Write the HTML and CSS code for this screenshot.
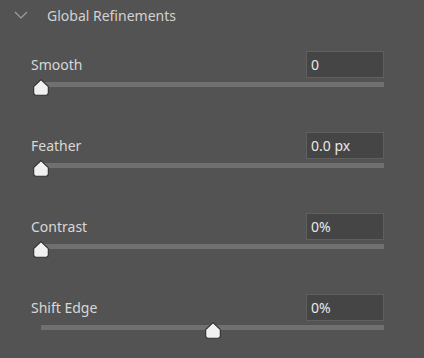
FILE: index.html
```html
<!DOCTYPE html>
<html lang="en">
<head>
    <meta charset="UTF-8">
    <title>Global Refinements</title>
    <link rel="stylesheet" href="styles.css">
</head>
<body>
    <div class="panel">
        <div class="panel-header">
            <svg class="chevron" width="14" height="8" viewBox="0 0 14 8">
                <polyline points="1,1 7,7 13,1" fill="none" stroke="#a0a0a0" stroke-width="1.2"/>
            </svg>
            <span class="panel-title">Global Refinements</span>
        </div>

        <div class="fields">
            <div class="field">
                <div class="field-row">
                    <label>Smooth</label>
                    <input type="text" class="value" value="0">
                </div>
                <div class="track">
                    <svg class="thumb" style="left: calc(0% - 8px)" width="16" height="17" viewBox="0 0 16 17"><path d="M8 0.7 L15.3 7.6 V13.8 Q15.3 16.3 12.8 16.3 H3.2 Q0.7 16.3 0.7 13.8 V7.6 Z" fill="#f0f0f0" stroke="#2f2f2f" stroke-width="1.1"/></svg>
                </div>
            </div>

            <div class="field">
                <div class="field-row">
                    <label>Feather</label>
                    <input type="text" class="value" value="0.0 px">
                </div>
                <div class="track">
                    <svg class="thumb" style="left: calc(0% - 8px)" width="16" height="17" viewBox="0 0 16 17"><path d="M8 0.7 L15.3 7.6 V13.8 Q15.3 16.3 12.8 16.3 H3.2 Q0.7 16.3 0.7 13.8 V7.6 Z" fill="#f0f0f0" stroke="#2f2f2f" stroke-width="1.1"/></svg>
                </div>
            </div>

            <div class="field">
                <div class="field-row">
                    <label>Contrast</label>
                    <input type="text" class="value" value="0%">
                </div>
                <div class="track">
                    <svg class="thumb" style="left: calc(0% - 8px)" width="16" height="17" viewBox="0 0 16 17"><path d="M8 0.7 L15.3 7.6 V13.8 Q15.3 16.3 12.8 16.3 H3.2 Q0.7 16.3 0.7 13.8 V7.6 Z" fill="#f0f0f0" stroke="#2f2f2f" stroke-width="1.1"/></svg>
                </div>
            </div>

            <div class="field">
                <div class="field-row">
                    <label>Shift Edge</label>
                    <input type="text" class="value" value="0%">
                </div>
                <div class="track">
                    <svg class="thumb" style="left: calc(50% - 8px)" width="16" height="17" viewBox="0 0 16 17"><path d="M8 0.7 L15.3 7.6 V13.8 Q15.3 16.3 12.8 16.3 H3.2 Q0.7 16.3 0.7 13.8 V7.6 Z" fill="#f0f0f0" stroke="#2f2f2f" stroke-width="1.1"/></svg>
                </div>
            </div>
        </div>
    </div>
</body>
</html>
```

FILE: styles.css
```css
body {
    margin: 0;
    background-color: #535353;
    font-family: 'Noto Sans', 'Open Sans', sans-serif;
    font-size: 14px;
    color: #d6d6d6;
}

.panel {
    width: 424px;
    height: 358px;
    overflow: hidden;
}

.panel-header {
    display: flex;
    align-items: center;
    height: 30px;
    padding-left: 14px;
}

.chevron {
    display: block;
    margin-right: 19px;
}

.panel-title {
    color: #d2d2d2;
}

.fields {
    padding: 21px 40px 0 31px;
}

.field {
    padding-bottom: 45px;
}

.field-row {
    display: flex;
    justify-content: space-between;
    align-items: center;
    height: 27px;
}

.field-row label {
    color: #d8d8d8;
}

.value {
    box-sizing: border-box;
    width: 78px;
    height: 27px;
    margin: 0;
    padding: 0 4px;
    background: #454545;
    border: 1px solid #5f5f5f;
    border-radius: 0;
    outline: none;
    font-family: inherit;
    font-size: 14px;
    color: #e8e8e8;
}

/* slider */
.track {
    position: relative;
    height: 5px;
    margin: 4px 0 0 10px;
    background: #707070;
}

.thumb {
    position: absolute;
    top: -3px;
    display: block;
}
```
